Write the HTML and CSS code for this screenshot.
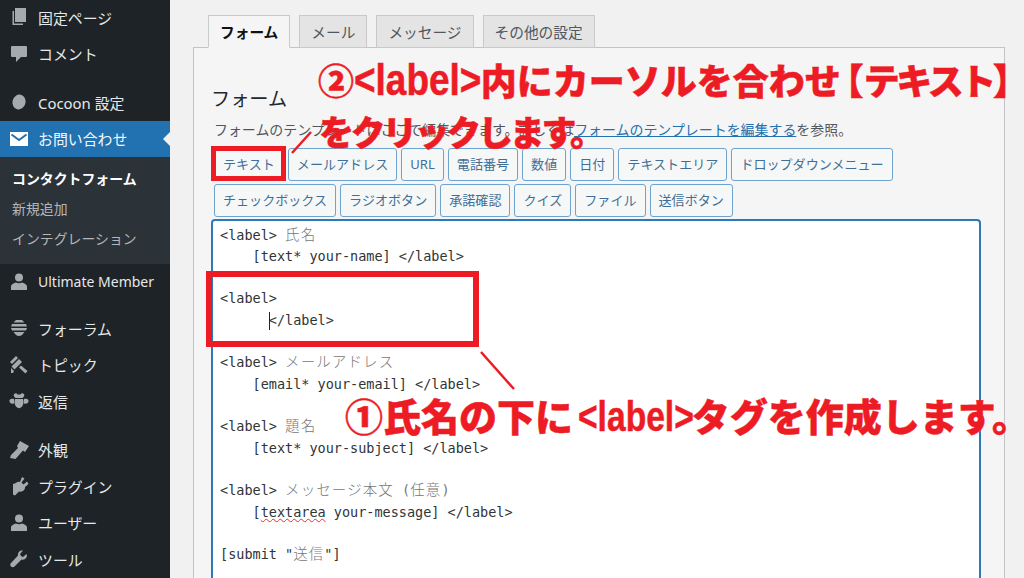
FILE: index.html
```html
<!DOCTYPE html>
<html lang="ja">
<head>
<meta charset="utf-8">
<title>コンタクトフォーム</title>
<link rel="stylesheet" href="styles.css">
</head>
<body>
<div class="page">
  <nav class="sidebar">
    <a class="item"><svg class="ico" viewBox="0 0 20 20"><path d="M6 1h11v14H6z"/><path d="M3.500 4H5v12.500h9V18H3.500z"/></svg><span>固定ページ</span></a>
    <a class="item"><svg class="ico" viewBox="0 0 20 20"><path d="M3 2h14a1 1 0 0 1 1 1v9a1 1 0 0 1-1 1h-5l-5 5v-5H3a1 1 0 0 1-1-1V3a1 1 0 0 1 1-1z"/></svg><span>コメント</span></a>
    <div class="sep"></div>
    <a class="item"><svg class="ico" viewBox="0 0 20 20"><ellipse cx="10" cy="10" rx="6.500" ry="7.500" transform="rotate(15 10 10)"/></svg><span>Cocoon 設定</span></a>
    <a class="item active"><svg class="ico" viewBox="0 0 20 20"><path d="M1 3h18v14H1z"/><path class="flap" d="M2.500 5.500 10 11l7.500-5.500"/></svg><span>お問い合わせ</span></a>
    <div class="sub">
      <a class="sub-item current">コンタクトフォーム</a>
      <a class="sub-item">新規追加</a>
      <a class="sub-item">インテグレーション</a>
    </div>
    <a class="item"><svg class="ico" viewBox="0 0 20 20"><circle cx="10" cy="5.500" r="4"/><path d="M2 18v-3.500c0-2 3-3.500 5-4 1.500 1 4.500 1 6 0 2 .5 5 2 5 4V18z"/></svg><span class="latin">Ultimate Member</span></a>
    <div class="sep sep-narrow"></div>
    <a class="item"><svg class="ico" viewBox="0 0 20 20"><path d="M7 2h6l2.500 2.500h-11z"/><path d="M3 6h14l1 2.500H2z"/><path d="M2 10h16l-1 2.500H3z"/><path d="M4.500 14h11L13 17q-3 2-6 0z"/></svg><span>フォーラム</span></a>
    <a class="item"><svg class="ico" viewBox="0 0 20 20"><path d="m7 1 2 2-6 6-2-2z"/><path d="m10 4 3 3-7.500 7.500-3-3z"/><path d="m12 10.500 6.500 5.500-2 2.500-6.500-6z"/><path d="M2 13l3 3-1 2H2z"/></svg><span>トピック</span></a>
    <a class="item"><svg class="ico" viewBox="0 0 20 20"><path d="M6 2.500a2 2 0 0 1 2.500 1h3A2 2 0 0 1 14 2.500a2 2 0 0 1 .5 3.500c-.5.500-1 1-1 1h-7s-.5-.5-1-1A2 2 0 0 1 6 2.500z"/><path d="M5 8c-3-1-5 .500-4.500 2.500S3 13 5 12.500zM15 8c3-1 5 .500 4.500 2.500S17 13 15 12.500z"/><path d="M6 8h8q1.500 4-1 7.500-3 3.500-6 0Q4.500 12 6 8z"/></svg><span>返信</span></a>
    <div class="sep"></div>
    <a class="item"><svg class="ico" viewBox="0 0 20 20"><path d="M11 1l9 5-4 6-2-1.500L6.500 19 1 18l1-3 7-7-1-2z"/></svg><span>外観</span></a>
    <a class="item"><svg class="ico" viewBox="0 0 20 20"><path d="m13 1 2.500 1.500-3 4 2 2 3.500-3 1.500 2.500-3.500 3c.5 3-3 5.500-6 4.500l-4 4-2-1V8l3-1c1-1 2.500-1.500 4-1z"/></svg><span>プラグイン</span></a>
    <a class="item"><svg class="ico" viewBox="0 0 20 20"><circle cx="10" cy="5.500" r="4"/><path d="M2 18v-3.500c0-2 3-3.500 5-4 1.500 1 4.500 1 6 0 2 .5 5 2 5 4V18z"/></svg><span>ユーザー</span></a>
    <a class="item"><svg class="ico" viewBox="0 0 20 20"><path d="M17.500 5 14 8l-2-1-1-2 3-3.500C11.500 1 8.500 3 9 6.500L2 14c-1 1-1 2.500 0 3.500s2.500 1 3.500 0L12.500 10.500C16 11.500 19 8 17.500 5z"/></svg><span>ツール</span></a>
  </nav>
  <main class="main">
    <div class="tabs">
      <a class="tab selected">フォーム</a>
      <a class="tab">メール</a>
      <a class="tab">メッセージ</a>
      <a class="tab">その他の設定</a>
    </div>
    <section class="panel">
      <h2 class="title">フォーム</h2>
      <p class="desc">フォームのテンプレートはここで編集できます。詳しくは<a class="link">フォームのテンプレートを編集する</a>を参照。</p>
      <div class="buttons">
        <span class="btn">テキスト</span><span class="btn">メールアドレス</span><span class="btn">URL</span><span class="btn">電話番号</span><span class="btn">数値</span><span class="btn">日付</span><span class="btn">テキストエリア</span><span class="btn">ドロップダウンメニュー</span>
        <span class="btn">チェックボックス</span><span class="btn">ラジオボタン</span><span class="btn">承諾確認</span><span class="btn">クイズ</span><span class="btn">ファイル</span><span class="btn">送信ボタン</span>
      </div>
      <div class="editor">
        <div class="line">&lt;label&gt; <span class="jp">氏名</span></div>
        <div class="line">    [text* your-name] &lt;/label&gt;</div>
        <div class="line"> </div>
        <div class="line">&lt;label&gt;</div>
        <div class="line">      <span class="caret"></span>&lt;/label&gt;</div>
        <div class="line"> </div>
        <div class="line">&lt;label&gt; <span class="jp">メールアドレス</span></div>
        <div class="line">    [email* your-email] &lt;/label&gt;</div>
        <div class="line"> </div>
        <div class="line">&lt;label&gt; <span class="jp">題名</span></div>
        <div class="line">    [text* your-subject] &lt;/label&gt;</div>
        <div class="line"> </div>
        <div class="line">&lt;label&gt; <span class="jp">メッセージ本文</span> <span class="dim">(</span><span class="jp">任意</span><span class="dim">)</span></div>
        <div class="line">    [<span class="spell">textarea</span> your-message] &lt;/label&gt;</div>
        <div class="line"> </div>
        <div class="line">[submit "<span class="jp">送信</span>"]</div>
      </div>
    </section>
  </main>
  <div class="note note-two">②<span class="tag">&lt;label&gt;</span>内にカーソルを合わせ<span class="open">【</span><span class="tight">テキスト</span>】</div>
  <div class="note note-click">をクリックします。</div>
  <div class="note note-one">①氏名の下に<span class="tag tag-small">&lt;label&gt;</span>タグを作成します。</div>
  <div class="mark mark-btn"></div>
  <div class="mark mark-box"></div>
  <svg class="leaders" viewBox="0 0 1024 578"><path d="M292 153 311 132M481 352 514 389"/></svg>
</div>
</body>
</html>
```
FILE: styles.css
```css
* { box-sizing: border-box; }
html, body { margin: 0; height: 100%; overflow: hidden; }
body { font-family: "Noto Sans", "Noto Sans CJK JP", sans-serif; background: #f1f1f1; color: #3c434a; }
.page { position: relative; display: flex; width: 1024px; height: 578px; overflow: hidden; }

.sidebar { width: 170px; flex: none; background: #1d2327; color: #e6e8e9; margin-top: -1px; height: 579px; }
.item { display: flex; align-items: center; height: 36.5px; padding-left: 9px; font-size: 14.900px; white-space: nowrap; }
.item span { margin-left: 9px; }
.item .latin { font-size: 14px; }
.ico { width: 20px; height: 20px; flex: none; fill: #a7aaad; }
.sep { height: 12px; }
.sep-narrow { height: 10px; }
.active { position: relative; background: #2271b1; color: #f4f8fb; }
.active .ico { fill: #fff; }
.active .flap { fill: none; stroke: #2271b1; stroke-width: 2; }
.active::after { content: ""; position: absolute; right: 0; top: 11px; border: 7px solid transparent; border-right-color: #f1f1f1; border-left-width: 0; }
.sub { background: #2c3338; padding: 7px 0 10px; height: 106.500px; }
.sub-item { display: block; height: 30px; line-height: 30px; padding-left: 12px; font-size: 13.900px; color: #b4b7ba; white-space: nowrap; }
.current { color: #fff; font-weight: 700; }

.main { flex: 1; min-width: 0; padding: 15px 0 0 23px; }
.tabs { display: flex; gap: 9px; padding-left: 15px; margin-bottom: -1px; position: relative; }
.tab { height: 33px; line-height: 32px; padding: 0 11px; border: 1px solid #c9c9c9; background: #e4e4e4; color: #50575e; font-size: 14.700px; white-space: nowrap; }
.selected { background: #f5f5f5; border-bottom-color: #f5f5f5; color: #111; font-weight: 700; }
.panel { width: 812px; height: 540px; padding: 0 18px; background: #f5f5f5; border: 1px solid #c3c4c7; }
.title { margin: 37px 0 0 -1px; font-size: 19.200px; line-height: 28px; font-weight: 400; color: #23282d; }
.desc { margin: 7px 0 0 2px; font-size: 13.950px; line-height: 20px; color: #50575e; white-space: nowrap; }
.link { color: #2271b1; text-decoration: underline; }
.buttons { display: flex; flex-wrap: wrap; gap: 3.500px 4px; margin: 8px 0 0 2px; width: 700px; }
.btn { height: 32.500px; line-height: 30px; padding: 0 8px; border: 1px solid #6fa3cf; border-radius: 3px; background: #f6f7f7; color: #3f6f98; font-size: 13.070px; white-space: nowrap; }
.editor { width: 770px; height: 400px; margin: 2px 0 0 -1px; padding: 4px 7px; background: #fff; border: 2px solid #2e7ab8; border-bottom: 0; border-radius: 4px 4px 0 0; }
.line { height: 21.330px; line-height: 21.330px; font-family: "DejaVu Sans Mono", monospace; font-size: 13.500px; color: #2f3437; white-space: pre; }
.jp { font-family: "Noto Sans CJK JP", sans-serif; font-size: 14.500px; line-height: 1; letter-spacing: 1.100px; color: #777; font-weight: 300; }
.dim { color: #777; }
.caret { display: inline-block; width: 1px; height: 18px; margin: 0 -1px 0 0; background: #222; vertical-align: -5px; }
.spell { text-decoration: underline wavy #e2332c 1px; }

.note { position: absolute; color: #ed1c24; font-family: "Noto Sans CJK JP", sans-serif; font-weight: 900; white-space: nowrap; line-height: 1; -webkit-text-stroke: 0.500px #ed1c24; }
.tag { display: inline-block; font-family: "Liberation Sans", sans-serif; font-weight: 700; font-size: 44px; line-height: 1; transform: scaleX(0.84); transform-origin: left center; margin-right: -25px; }
.tag-small { font-size: 42px; transform: scaleX(0.8); margin-left: 5px; margin-right: -31px; }
.note-two { left: 318px; top: 58px; font-size: 36px; }
.open { margin-left: -13px; }
.tight { letter-spacing: -3.500px; }
.note-click { left: 319px; top: 113px; font-size: 35px; letter-spacing: -3.200px; }
.note-one { left: 345px; top: 396px; font-size: 38px; }
.mark { position: absolute; border: 5px solid #ed1c24; }
.mark-btn { left: 211px; top: 146px; width: 75px; height: 35px; }
.mark-box { left: 206px; top: 271px; width: 273px; height: 76px; border-width: 6px; }
.leaders { position: absolute; inset: 0; width: 1024px; height: 578px; fill: none; stroke: #ed1c24; stroke-width: 2.500px; }
```
